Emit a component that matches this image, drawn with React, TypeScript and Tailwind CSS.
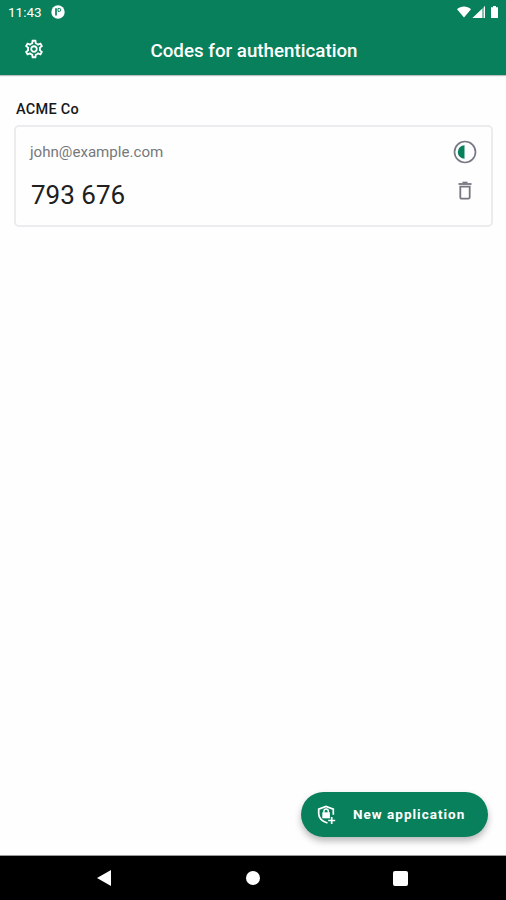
import React from "react";
import { MdOutlineSettings } from "react-icons/md";

function StatusBar() {
  return (
    <div className="flex h-6 items-center justify-between pl-2 pr-[7px] text-[14px]">
      <div className="flex items-center gap-[9px]">
        <span className="w-[34px] whitespace-nowrap text-[13.5px] leading-6">11:43</span>
        <svg width="14" height="14" viewBox="0 0 14 14">
          <circle cx="7" cy="7" r="6.7" fill="#fff" />
          <path d="M5 3.200v7.400" fill="none" stroke="#08805b" strokeWidth="1.700" />
          <path d="M7 3.400h1.300a1.500 1.500 0 0 1 0 3H7z" fill="none" stroke="#08805b" strokeWidth="1" />
        </svg>
      </div>
      <svg width="42" height="14" viewBox="0 0 42 14" fill="#fff">
        <path d="M0 4.2C4 .6 10 .6 14 4.2L7 12.500z" />
        <path d="M28 1v12H15.500z" fillOpacity=".5" />
        <path d="M25 4v9H15.500z" />
        <path d="M28 1v12h-1V2z" />
        <path d="M36 1h3v1.300h2V13h-7V2.300h2z" />
      </svg>
    </div>
  );
}

function AppBar() {
  return (
    <div className="grid h-[51px] grid-cols-[68px_1fr_66px] items-center">
      <MdOutlineSettings className="mb-[2px] ml-[23px]" size={22} />
      <h1 className="mt-[2px] whitespace-nowrap text-center text-[18.75px] font-medium leading-6">
        Codes for authentication
      </h1>
    </div>
  );
}

function CodeCard() {
  return (
    <div className="flex h-[102px] justify-between rounded-[5px] border-2 border-[#ebecee] pl-[14px] pr-[14px]">
      <div className="flex flex-col">
        <span className="mt-[15px] whitespace-nowrap text-[15.1px] leading-5 text-[#77787a]">john@example.com</span>
        <span className="ml-px mt-[17px] whitespace-nowrap text-[26px] leading-8 text-[#202020]">793 676</span>
      </div>
      <div className="flex flex-col items-center pt-[13px]">
        <svg width="24" height="24" viewBox="0 0 24 24">
          <circle cx="12" cy="12" r="10.500" fill="none" stroke="#777985" strokeWidth="1.700" />
          <path d="M11.500 5.300v13.400a6.700 6.700 0 0 1 0-13.400z" fill="#08805b" />
        </svg>
        <svg className="mt-[17px]" width="16" height="20" viewBox="0 0 16 20" fill="none" stroke="#77777f">
          <path d="M1.500 3h13" strokeWidth="1.800" />
          <path d="M5.500 1.500h5" strokeWidth="1.600" />
          <path d="M3.300 5.700h9.400v10.500q0 1.500-1.500 1.500H4.800q-1.500 0-1.500-1.500z" strokeWidth="1.800" />
        </svg>
      </div>
    </div>
  );
}

function NewApplicationButton() {
  return (
    <button className="flex h-[45px] w-[187px] items-center rounded-full bg-[#08805b] pl-4 text-white shadow-[0_4px_7px_rgba(0,0,0,0.28)]">
      <svg width="20" height="20" viewBox="0 0 20 20" fill="none" stroke="#fff">
        <path d="M10.500 18C5 16.300 1.700 13.200 1.700 8.500V4.200L9 1.500l7.300 2.700v5.600" strokeWidth="1.700" />
        <path d="M5.300 7.300h7.600v6H5.300z" fill="#fff" stroke="none" />
        <path d="M6.900 7.800V6.200a2.200 2.200 0 0 1 4.400 0v1.600" strokeWidth="1.400" />
        <path d="M14.700 12v7M11.200 15.500h7" strokeWidth="1.700" />
      </svg>
      <span className="ml-[16px] whitespace-nowrap text-[13.500px] font-bold tracking-[1px]">New application</span>
    </button>
  );
}

function NavigationBar() {
  return (
    <nav className="flex h-[44px] shrink-0 items-center justify-between bg-black pl-[97px] pr-[98px] text-white">
      <svg width="14" height="16" viewBox="0 0 14 16"><path d="M0 8L14 0v16z" fill="#fff" /></svg>
      <span className="ml-[2px] size-[14px] rounded-full bg-white" />
      <span className="size-[15px] rounded-[2px] bg-white" />
    </nav>
  );
}

export default function App() {
  return (
    <div className="flex h-[900px] w-[506px] flex-col overflow-hidden bg-[#fefefe] font-['Roboto',sans-serif]">
      <header className="h-[75px] shrink-0 bg-[#08805b] text-white shadow-[0_1px_1px_rgba(0,0,0,0.25)]">
        <StatusBar />
        <AppBar />
      </header>
      <main className="flex flex-1 flex-col pl-[14px] pr-[13px] pt-[25px]">
        <h2 className="mb-[5px] pl-[2px] text-[14.500px] font-medium leading-5 tracking-[0.25px] text-[#181818]">ACME Co</h2>
        <CodeCard />
        <div className="mb-[18px] mr-[5px] mt-auto flex justify-end">
          <NewApplicationButton />
        </div>
      </main>
      <div className="h-px shrink-0 bg-[#999]" />
      <NavigationBar />
    </div>
  );
}
